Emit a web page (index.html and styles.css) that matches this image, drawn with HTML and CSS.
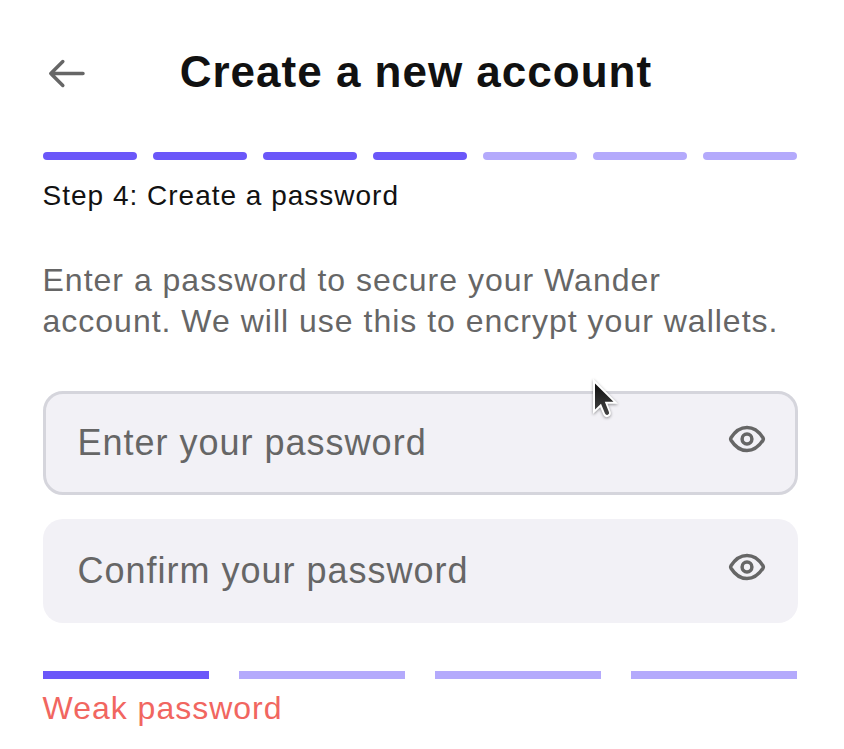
FILE: index.html
```html
<!DOCTYPE html>
<html lang="en">
<head>
<meta charset="utf-8">
<title>Create a new account</title>
<link rel="stylesheet" href="styles.css">
</head>
<body>
<main class="page">
  <header class="header">
    <svg class="back" width="38" height="32" viewBox="0 0 38 32" fill="none" stroke="#666" stroke-width="3.5" stroke-linecap="round" stroke-linejoin="round"><path d="M15.800 4.500 3.800 16.500l12 12M3.800 16.500H36"/></svg>
    <h1 class="title">Create a new account</h1>
  </header>
  <div class="steps"><i class="done"></i><i class="done"></i><i class="done"></i><i class="done"></i><i></i><i></i><i></i></div>
  <p class="step-label">Step 4: Create a password</p>
  <p class="intro">Enter a password to secure your Wander<br>account. We will use this to encrypt your wallets.</p>
  <div class="field focused">
    <span>Enter your password</span>
    <svg class="eye" width="38" height="30" viewBox="0 0 38 30" fill="none" stroke="#666" stroke-width="3.5" stroke-linejoin="round"><path d="M3 13.800C7 7.500 12.300 3.500 19 3.500S31 7.500 35 13.800Q35.700 15 35 16.200C31 22.500 25.700 26.500 19 26.500S7 22.500 3 16.200Q2.300 15 3 13.800Z"/><circle cx="19" cy="15" r="4.900"/></svg>
  </div>
  <div class="field">
    <span>Confirm your password</span>
    <svg class="eye" width="38" height="30" viewBox="0 0 38 30" fill="none" stroke="#666" stroke-width="3.5" stroke-linejoin="round"><path d="M3 13.800C7 7.500 12.300 3.500 19 3.500S31 7.500 35 13.800Q35.700 15 35 16.200C31 22.500 25.700 26.500 19 26.500S7 22.500 3 16.200Q2.300 15 3 13.800Z"/><circle cx="19" cy="15" r="4.900"/></svg>
  </div>
  <div class="strength"><i class="done"></i><i></i><i></i><i></i></div>
  <p class="weak">Weak password</p>
  <svg class="cursor" width="40" height="50" viewBox="0 0 40 50">
    <defs><linearGradient id="shade" x1="0" y1="0" x2="0" y2="1"><stop offset="0" stop-color="#111"/><stop offset="1" stop-color="#444"/></linearGradient></defs>
    <path d="M7 3.500V39L14.200 32.200 17.500 40Q19 43 22.200 41.800T24.800 37.300L21.500 28.800H32Z" fill="#fff"/>
    <path d="M9 8.500V34.500L15 28.800 19 38.500Q20 40.500 21.800 39.700T23 37.300L18.800 26.800H27.500Z" fill="url(#shade)"/>
  </svg>
</main>
</body>
</html>
```
FILE: styles.css
```css
* { box-sizing: border-box; }
body { margin: 0; background: #fff; font-family: "Liberation Sans", Arial, sans-serif; }
.page { position: relative; width: 844px; height: 749px; padding: 45px 46px 0 43px; overflow: hidden; }
p, h1 { margin: 0; white-space: nowrap; }
.header { display: flex; align-items: center; height: 54px; }
.back { margin: 2px 0 0 4px; }
.title { margin-left: 94.7px; color: #111; font-size: 44px; line-height: 54px; letter-spacing: 1px; }
.steps { display: grid; grid-template-columns: repeat(7, 94px); gap: 16px; margin-top: 53px; }
.steps i { height: 8px; border-radius: 4px; background: #b4aafc; }
.steps .done, .strength .done { background: #6b57f9; }
.step-label { margin: 18px 0 0 -0.5px; font-size: 28px; line-height: 36px; letter-spacing: 1px; color: #121212; }
.intro { margin: 46px 0 0 -0.5px; font-size: 32px; line-height: 41px; letter-spacing: 1px; color: #666; }
.field { display: flex; align-items: center; justify-content: space-between; height: 104px; margin-top: 24px; padding: 0 32px 0 34.5px; border-radius: 20px; background: #f2f1f6; color: #666; font-size: 36px; line-height: 41px; letter-spacing: 1px; }
.focused { margin-top: 49px; padding: 0 29px 0 31.5px; border: 3px solid #d5d5dc; }
.field span { margin-top: -1px; }
.eye { margin-top: -8px; }
.strength { display: grid; grid-template-columns: repeat(4, 166px); gap: 30px; margin-top: 48px; }
.strength i { height: 8px; background: #b4aafc; }
.weak { margin: 9px 0 0 -0.5px; font-size: 32px; line-height: 40px; letter-spacing: 1px; color: #f16660; }
.cursor { position: absolute; left: 586px; top: 375px; filter: drop-shadow(0 1px 1.5px rgba(0,0,0,.4)); }
```
